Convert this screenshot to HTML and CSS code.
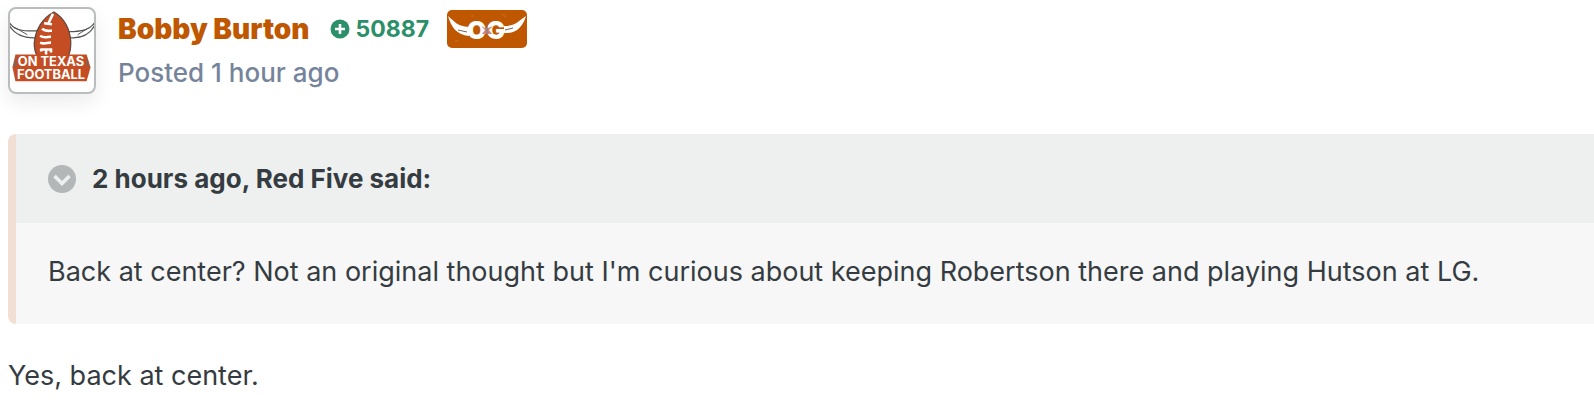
FILE: index.html
```html
<!DOCTYPE html>
<html lang="en">
<head>
<meta charset="utf-8">
<title>Forum post</title>
<link rel="stylesheet" href="styles.css">
</head>
<body>
<article class="post">
  <header class="post-header">
    <a class="avatar" href="#" aria-label="Bobby Burton's profile">
      <svg class="avatar-art" viewBox="0 0 84 84" aria-hidden="true">
        <g fill="#fff" stroke="#555" stroke-width="1.3" stroke-linejoin="round">
          <path d="M-1 14C4 21 11 23 29 22L28 29C15 30 5 27 -1 17Z"/>
          <path d="M85 14C80 21 73 23 58 23L60 29C71 30 80 26 85 17Z"/>
        </g>
        <path d="M5 19L17 26M79 19L68 26" stroke="#555" fill="none"/>
        <path d="M44 3C32 9 25 22 24 35C24 40 25 46 29 50H57C61 44 61 39 61 33C60 20 54 9 44 3Z" fill="#c44d24" stroke="#62483e" stroke-width="1.3"/>
        <path d="M43 5C41 9 39 13 38 16M34 14.500L42 15.500M32 20C35 23 38 22 42 22M30 27C34 30 37 28 41 28M30 34C34 36 37 34 41 34M31 41H41V44M31 40V43M36 40V47" fill="none" stroke="#fff" stroke-width="2.600"/>
        <path d="M5 46H77L81 59L77 73H5L2 59Z" fill="#c44d24"/>
        <path d="M6 47L3 59L6 57ZM76 47L80 59L77 57Z" fill="#77645d"/>
        <text class="avatar-text" x="41" y="58" text-anchor="middle">ON TEXAS</text>
        <text class="avatar-text" x="41" y="71" text-anchor="middle">FOOTBALL</text>
      </svg>
    </a>
    <div class="author">
      <div class="author-line">
        <a class="name" href="#">Bobby Burton</a>
        <span class="reputation">
          <svg class="plus" viewBox="0 0 20 20" aria-hidden="true"><circle cx="10" cy="10" r="9.500" fill="#2b8f69"/><path d="M10 5V15M5 10H15" stroke="#fff" stroke-width="2.600"/></svg>
          50887
        </span>
        <svg class="badge" viewBox="0 0 80 38" role="img" aria-label="OG">
          <rect width="80" height="38" rx="5" fill="#bf5700"/>
          <path d="M1 6C8 12 10 16 22 17V26C9 25 4 16 1 6ZM79 6C71 11 69 16 57 16V23C70 24 76 16 79 6Z" fill="#fff"/>
          <path d="M11 20L20 22M58 20L66 18" stroke="#766154" fill="none"/>
          <text class="badge-text" x="39" y="29" text-anchor="middle">OG</text>
          <path d="M34 16L38 18H41L46 16L42 20L45 24H35L38 20Z" fill="#c98779"/>
          <path d="M40 15V24" stroke="#7d7788" fill="none"/>
          <path d="M55 4L59 7M8 31H12M24 6H27" stroke="#d17b37" stroke-width=".7"/>
        </svg>
      </div>
      <a class="posted" href="#">Posted 1 hour ago</a>
    </div>
  </header>
  <blockquote class="quote">
    <div class="quote-header">
      <button class="toggle" type="button" aria-label="Collapse quote">
        <svg class="toggle-icon" viewBox="0 0 28 28" aria-hidden="true"><circle cx="14" cy="14" r="14" fill="#b3b7b7"/><path d="M6.500 11L14 18.500L21.500 11" fill="none" stroke="#eef0ef" stroke-width="3.600"/></svg>
      </button>
      <cite class="quote-source">2 hours ago, Red Five said:</cite>
    </div>
    <p class="quote-body">Back at center? Not an original thought but I'm curious about keeping Robertson there and playing Hutson at LG.</p>
  </blockquote>
  <p class="reply">Yes, back at center.</p>
</article>
</body>
</html>
```
FILE: styles.css
```css
* { box-sizing: border-box; }
body {
  margin: 0;
  background: #fff;
  color: #353c41;
  font-family: Inter, "Liberation Sans", sans-serif;
  font-size: 27px;
  line-height: 44px;
}
a { color: inherit; text-decoration: none; }
.post { padding: 7px 0 0 8px; }
.post-header { display: flex; gap: 22px; }
.avatar {
  display: block;
  flex: none;
  width: 88px;
  height: 87px;
  border: 2px solid #babdbe;
  border-radius: 8px;
  background: #fff;
  overflow: hidden;
  box-shadow: 0 8px 20px rgba(0, 0, 0, 0.08);
}
.avatar-art { display: block; width: 100%; height: 100%; }
.avatar-text {
  font-family: Inter, sans-serif;
  font-size: 13px;
  font-weight: 700;
  fill: #fff;
}
.author-line { display: flex; align-items: center; height: 44px; }
.name { color: #bf5700; font-size: 28px; font-weight: 900; }
.reputation {
  display: flex;
  align-items: center;
  gap: 6px;
  margin-left: 20px;
  color: #2b8f69;
  font-size: 23px;
  font-weight: 700;
}
.plus { width: 20px; height: 20px; }
.badge { width: 80px; height: 38px; margin-left: 18px; }
.badge-text {
  font-family: Inter, sans-serif;
  font-size: 25px;
  font-weight: 900;
  fill: #fff;
}
.posted { display: block; color: #76849b; font-size: 26px; font-weight: 500; line-height: 44px; }
.quote {
  margin: 39px 0 0;
  border-left: 8px solid #f0dfd2;
  border-radius: 8px 0 0 8px;
  background: #f7f7f7;
}
.quote-header {
  display: flex;
  align-items: center;
  gap: 16px;
  padding: 22px 32px;
  background: #eef0ef;
}
.toggle { flex: none; padding: 0; border: 0; background: none; cursor: pointer; }
.toggle-icon { display: block; width: 28px; height: 28px; }
.quote-source { font-size: 26px; font-style: normal; font-weight: 700; line-height: 45px; }
.quote-body { margin: 0; padding: 27px 32px 30px; }
.reply { margin: 0; padding: 30px 0; }
```
